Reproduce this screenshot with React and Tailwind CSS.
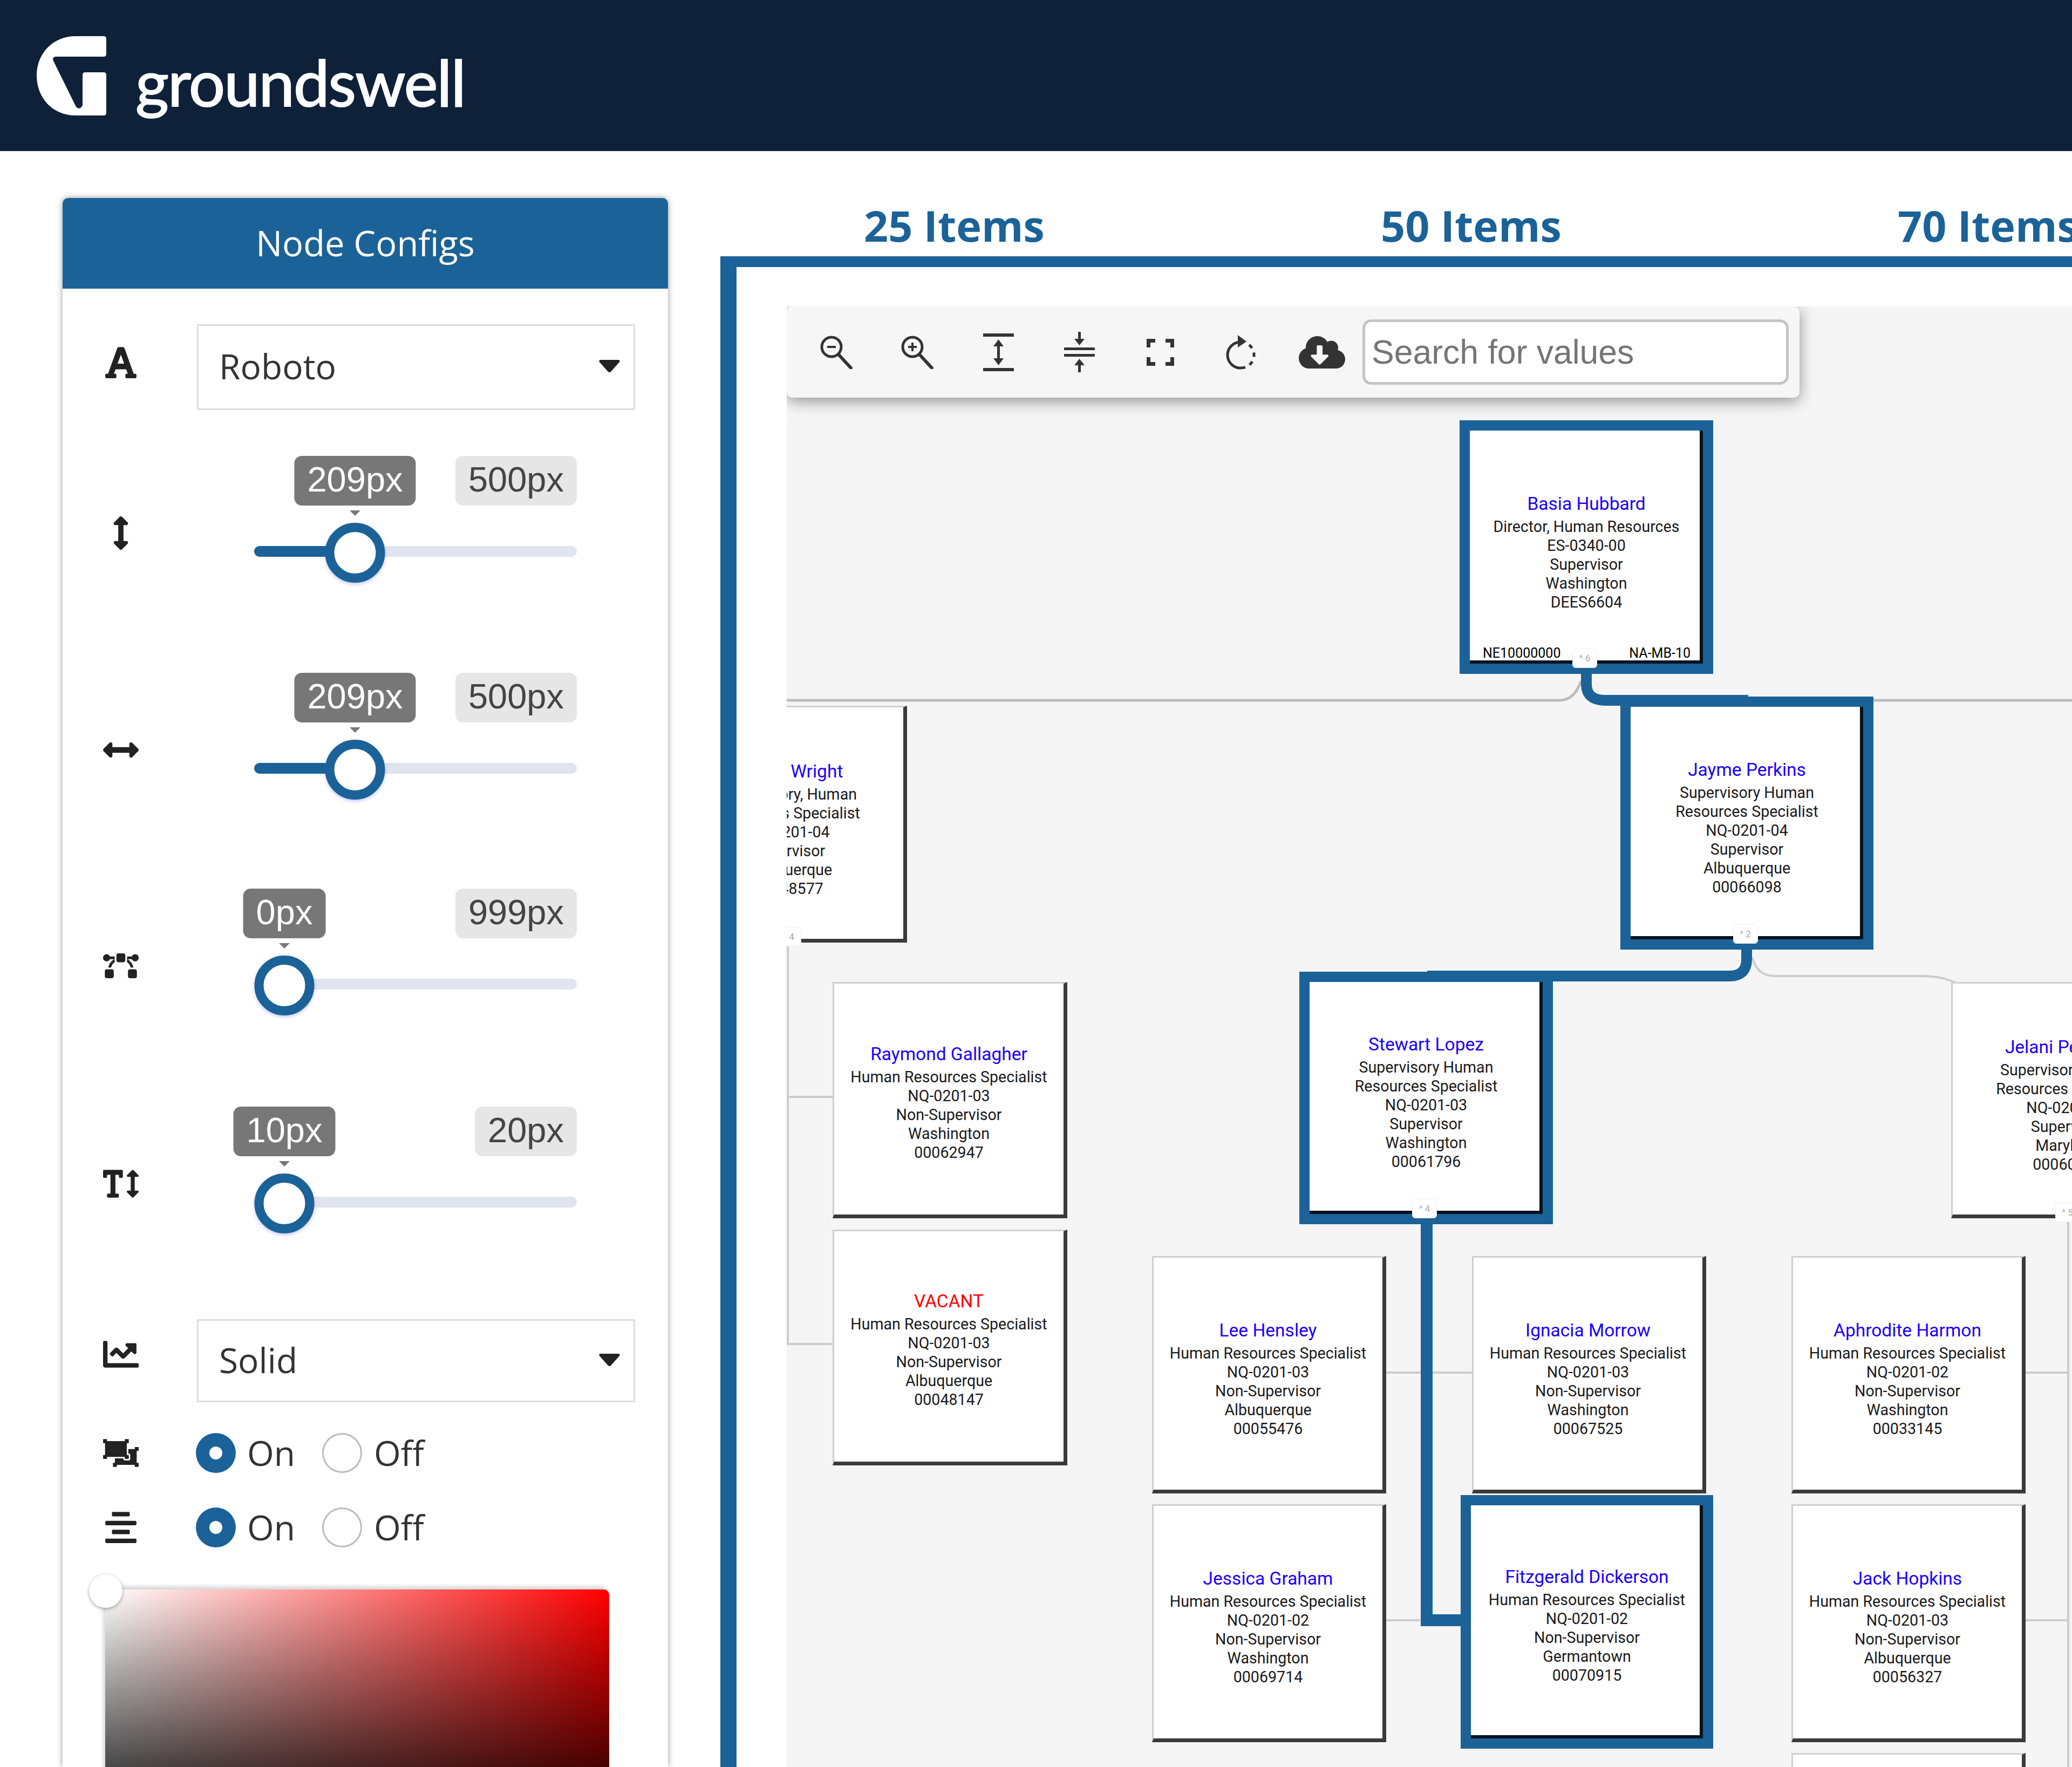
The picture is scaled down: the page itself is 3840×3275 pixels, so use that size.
import React from "react";
import { FaFont, FaArrowsAltV, FaArrowsAltH, FaBezierCurve, FaTextHeight, FaChartLine, FaObjectUngroup, FaAlignCenter, FaCloudDownloadAlt } from "react-icons/fa";

const OX = 1458;
const OY = 568;

const nodes = [
  { x: 1246, y: 1308, w: 435, h: 439, pt: "pt-[22px]", name: "Ariana Wright", lines: ["Supervisory, Human", "Resources Specialist", "NQ-0201-04", "Supervisor", "Albuquerque", "00048577"], btn: "^ 4" },
  { x: 1543, y: 1820, w: 435, h: 438, pt: "pt-[12px]", name: "Raymond Gallagher", lines: ["Human Resources Specialist", "NQ-0201-03", "Non-Supervisor", "Washington", "00062947"] },
  { x: 1543, y: 2279, w: 435, h: 437, pt: "pt-[12px]", name: "VACANT", red: true, lines: ["Human Resources Specialist", "NQ-0201-03", "Non-Supervisor", "Albuquerque", "00048147"] },
  { x: 2135, y: 2328, w: 434, h: 440, pt: "pt-[18px]", name: "Lee Hensley", lines: ["Human Resources Specialist", "NQ-0201-03", "Non-Supervisor", "Albuquerque", "00055476"] },
  { x: 2728, y: 2328, w: 434, h: 440, pt: "pt-[18px]", name: "Ignacia Morrow", lines: ["Human Resources Specialist", "NQ-0201-03", "Non-Supervisor", "Washington", "00067525"] },
  { x: 3320, y: 2328, w: 434, h: 440, pt: "pt-[18px]", name: "Aphrodite Harmon", lines: ["Human Resources Specialist", "NQ-0201-02", "Non-Supervisor", "Washington", "00033145"] },
  { x: 2135, y: 2788, w: 434, h: 441, pt: "pt-[18px]", name: "Jessica Graham", lines: ["Human Resources Specialist", "NQ-0201-02", "Non-Supervisor", "Washington", "00069714"] },
  { x: 3320, y: 2788, w: 434, h: 441, pt: "pt-[18px]", name: "Jack Hopkins", lines: ["Human Resources Specialist", "NQ-0201-03", "Non-Supervisor", "Albuquerque", "00056327"] },
  { x: 3320, y: 3249, w: 434, h: 441, pt: "pt-[18px]", lines: [] },
  { x: 3616, y: 1820, w: 435, h: 438, pt: "pt-[22px]", name: "Jelani Peterson", lines: ["Supervisory Human", "Resources Specialist", "NQ-0201-04", "Supervisor", "Maryland", "00060482"], btn: "^ 5" },
  { x: 2724, y: 798, w: 432, h: 432, pt: "pt-[24px]", hl: true, name: "Basia Hubbard", lines: ["Director, Human Resources", "ES-0340-00", "Supervisor", "Washington", "DEES6604"], foot: ["NE10000000", "NA-MB-10"], btn: "^ 6" },
  { x: 3022, y: 1310, w: 431, h: 431, pt: "pt-[22px]", hl: true, name: "Jayme Perkins", lines: ["Supervisory Human", "Resources Specialist", "NQ-0201-04", "Supervisor", "Albuquerque", "00066098"], btn: "^ 2" },
  { x: 2427, y: 1820, w: 432, h: 430, pt: "pt-[22px]", hl: true, name: "Stewart Lopez", lines: ["Supervisory Human", "Resources Specialist", "NQ-0201-03", "Supervisor", "Washington", "00061796"], btn: "^ 4" },
  { x: 2726, y: 2790, w: 430, h: 432, pt: "pt-[18px]", hl: true, name: "Fitzgerald Dickerson", lines: ["Human Resources Specialist", "NQ-0201-02", "Non-Supervisor", "Germantown", "00070915"] },
];

function Node({ n }) {
  const base = n.hl
    ? "shadow-[0_0_0_19px_#1b6298] border-r-[6px] border-b-[6px] border-[#04131f] pl-[6px]"
    : "border-l-[3px] border-t-[3px] border-r-[7px] border-b-[7px] border-t-[#cfcfcf] border-l-[#cfcfcf] border-r-[#3a3a3a] border-b-[#3a3a3a]";
  return (
    <div
      className={`absolute box-border bg-white flex flex-col items-center justify-center font-['Roboto',sans-serif] text-[28.6px] leading-[35px] text-[#1a1a1a] ${base} ${n.pt}`}
      style={{ left: n.x - OX, top: n.y - OY, width: n.w, height: n.h }}
    >
      {n.name && (
        <div className={`mb-[4px] text-[33.5px] leading-[42px] whitespace-nowrap ${n.red ? "text-[#ff0000]" : "text-[#1a00ff]"}`}>{n.name}</div>
      )}
      {n.lines.map((l, i) => (
        <div key={i} className="whitespace-nowrap">{l}</div>
      ))}
      {n.foot && (
        <div className="absolute left-[24px] right-[17px] bottom-[-2px] flex justify-between text-[25px] leading-[30px] text-black">
          <span>{n.foot[0]}</span>
          <span>{n.foot[1]}</span>
        </div>
      )}
      {n.btn && (
        <div className="absolute left-1/2 -translate-x-1/2 -bottom-[14px] w-[46px] h-[36px] bg-white rounded-[6px] border border-[#eeeeee] flex items-center justify-center text-[17px] leading-none text-[#aaaaaa]">
          {n.btn}
        </div>
      )}
    </div>
  );
}

function Connectors() {
  return (
    <svg className="absolute left-0 top-0 w-[2382px] h-[2707px]" viewBox={`${OX} ${OY} 2382 2707`} fill="none">
      <g stroke="#bdbdbd" strokeWidth="5">
        <path d="M2930 1262 Q2918 1298 2890 1298 H1458" />
        <path d="M3400 1298 H3840" />
      </g>
      <g stroke="#cccccc" strokeWidth="4">
        <path d="M1460 1747 V2491 H1543" />
        <path d="M1460 2033 H1543" />
        <path d="M3248 1775 Q3256 1809 3290 1809 H3560 Q3600 1809 3625 1822" />
        <path d="M2569 2544 H2728" />
        <path d="M2569 3003 H2632" />
        <path d="M3754 2544 H3833" />
        <path d="M3754 3003 H3833" />
        <path d="M3833 2262 V3275" />
      </g>
      <g stroke="#1b6298" strokeWidth="20">
        <path d="M2940 1245 V1268 Q2940 1298 2975 1298 H3240" />
        <path d="M3237 1755 V1778 Q3237 1809 3205 1809 H2645" />
        <path d="M2644 2265 V3003 H2710" strokeWidth="22" />
      </g>
    </svg>
  );
}

function Magnifier({ plus }) {
  return (
    <svg width="60" height="62" viewBox="0 0 60 62" fill="none" stroke="#333">
      <circle cx="21" cy="21" r="18" strokeWidth="5" />
      <path d="M34 35 L57 60" strokeWidth="6" strokeLinecap="round" />
      <path d="M13 21 H29" strokeWidth="4" />
      {plus && <path d="M21 13 V29" strokeWidth="4" />}
    </svg>
  );
}

function ExpandIcon() {
  return (
    <svg width="57" height="70" viewBox="0 0 57 70" fill="#333">
      <rect width="57" height="6" />
      <rect y="64" width="57" height="6" />
      <rect x="26" y="16" width="5" height="38" />
      <polygon points="28.5,11 19,24 38,24" />
      <polygon points="28.5,59 19,46 38,46" />
    </svg>
  );
}

function CompressIcon() {
  return (
    <svg width="57" height="75" viewBox="0 0 57 75" fill="#333">
      <rect y="29" width="57" height="5" />
      <rect y="41" width="57" height="5" />
      <rect x="26" y="0" width="5" height="16" />
      <polygon points="28.5,25 19,13 38,13" />
      <rect x="26" y="59" width="5" height="16" />
      <polygon points="28.5,50 19,62 38,62" />
    </svg>
  );
}

function FullIcon() {
  return (
    <svg width="51" height="50" viewBox="0 0 51 50" fill="none" stroke="#333" strokeWidth="7">
      <path d="M3.5 16 V3.5 H16" />
      <path d="M35 3.5 H47.5 V16" />
      <path d="M3.5 34 V46.5 H16" />
      <path d="M35 46.5 H47.5 V34" />
    </svg>
  );
}

function RotateIcon() {
  return (
    <svg width="57" height="66" viewBox="0 0 57 66" fill="none" stroke="#333" strokeWidth="5">
      <path d="M26 14 A24 24 0 0 0 28 62" />
      <path d="M28 62 A24 24 0 0 0 52 38 A24 24 0 0 0 40 17" strokeDasharray="8 9" />
      <polygon points="22,1 38,13 22,24" fill="#333" stroke="none" />
    </svg>
  );
}

function Caret() {
  return (
    <svg width="39" height="24" viewBox="0 0 39 24" fill="#222">
      <path d="M3 0 H36 Q40 0 38 4 L22 22 Q19.5 24 17 22 L1 4 Q-1 0 3 0Z" />
    </svg>
  );
}

function IconCol({ children, h }) {
  return <div className={`w-[216px] shrink-0 flex items-center justify-center text-[#222] ${h}`}>{children}</div>;
}

function Slider({ icon, value, max, thumb, fill, rowH }) {
  const chip = "h-[92px] px-[24px] pb-[5px] rounded-[14px] flex items-center text-[65px] leading-none font-['Liberation_Sans',sans-serif]";
  return (
    <div className={`flex ${rowH}`}>
      <IconCol h="h-[286px]">{icon}</IconCol>
      <div className="ml-[139px] w-[598px] relative">
        <div className="flex justify-end">
          <span className={`${chip} bg-[#e6e6e6] text-[#444]`}>{max}</span>
        </div>
        <span className={`${chip} absolute top-0 -translate-x-1/2 bg-[#777777] text-white whitespace-nowrap`} style={{ left: thumb }}>{value}</span>
        <span className="absolute top-[101px] -translate-x-1/2 w-0 h-0 border-x-[10px] border-x-transparent border-t-[10px] border-t-[#777777]" style={{ left: thumb }} />
        <div className="mt-[75px] h-[20px] rounded-full bg-[#dfe4ee] relative">
          {fill && <div className="absolute left-0 top-0 bottom-0 rounded-full bg-[#1b6298]" style={{ width: thumb }} />}
        </div>
        <span className="absolute top-[124px] -translate-x-1/2 w-[111px] h-[111px] rounded-full border-[17px] border-[#1b6298] bg-white shadow-[0_3px_6px_rgba(70,70,230,0.3)]" style={{ left: thumb }} />
      </div>
    </div>
  );
}

function Select({ icon, label, h, iconH }) {
  return (
    <div className="flex items-start">
      <IconCol h={iconH}>{icon}</IconCol>
      <div className={`ml-[33px] w-[812px] ${h} border-[3px] border-[#dddddd] flex items-center justify-between pl-[38px] pr-[25px] pb-[3px] text-[64px] text-[#333]`}>
        <span>{label}</span>
        <Caret />
      </div>
    </div>
  );
}

function Radios({ icon, mt }) {
  return (
    <div className={`flex items-center h-[74px] ${mt}`}>
      <IconCol h="h-[74px]">{icon}</IconCol>
      <div className="ml-[31px] flex items-center text-[64px] leading-none text-[#333]">
        <span className="w-[74px] h-[74px] rounded-full bg-[#1b6298] flex items-center justify-center">
          <span className="w-[24px] h-[24px] rounded-full bg-white" />
        </span>
        <span className="ml-[21px] w-[139px]">On</span>
        <span className="w-[74px] h-[74px] rounded-full bg-white border-[3px] border-[#bbbbbb]" />
        <span className="ml-[22px]">Off</span>
      </div>
    </div>
  );
}

function Panel() {
  return (
    <div className="ml-[116px] mt-[87px] w-[1122px] shrink-0 rounded-t-[10px] bg-white shadow-[0_0_12px_rgba(0,0,0,0.4)]">
      <div className="h-[168px] rounded-t-[10px] bg-[#1b6298] flex items-center justify-center text-white text-[65px]">Node Configs</div>
      <div className="pt-[66px]">
        <Select icon={<FaFont size={66} />} label="Roboto" h="h-[159px]" iconH="h-[142px]" />
        <div className="mt-[85px]">
          <Slider icon={<FaArrowsAltV size={62} />} value="209px" max="500px" thumb={187} fill rowH="h-[402px]" />
          <Slider icon={<FaArrowsAltH size={66} />} value="209px" max="500px" thumb={187} fill rowH="h-[400px]" />
          <Slider icon={<FaBezierCurve size={66} />} value="0px" max="999px" thumb={56} rowH="h-[404px]" />
          <Slider icon={<FaTextHeight size={66} />} value="10px" max="20px" thumb={56} rowH="h-[394px]" />
        </div>
        <Select icon={<FaChartLine size={66} />} label="Solid" h="h-[154px]" iconH="h-[130px]" />
        <Radios icon={<FaObjectUngroup size={66} />} mt="mt-[57px]" />
        <Radios icon={<FaAlignCenter size={66} />} mt="mt-[64px]" />
        <div className="relative mt-[78px] ml-[79px] w-[934px] h-[460px] rounded-tr-[10px] bg-[linear-gradient(to_right,#ffffff,#ff0000)] shadow-[-3px_-5px_8px_rgba(0,0,0,0.18)]">
          <div className="absolute inset-0 rounded-tr-[10px] bg-[linear-gradient(to_bottom,transparent,#000000)]" />
          <span className="absolute -left-[30px] -top-[28px] w-[62px] h-[62px] rounded-full bg-white shadow-[0_2px_6px_rgba(0,0,0,0.35)]" />
        </div>
      </div>
    </div>
  );
}

function Toolbar() {
  const slot = "w-[150px] shrink-0 flex items-center justify-center";
  return (
    <div className="absolute left-0 top-0 w-[1877px] h-[169px] rounded-[10px] bg-[#f6f6f6] shadow-[0_6px_28px_rgba(0,0,0,0.42)] flex items-center pl-[17px]">
      <span className={slot}><Magnifier /></span>
      <span className={slot}><Magnifier plus /></span>
      <span className={slot}><ExpandIcon /></span>
      <span className={slot}><CompressIcon /></span>
      <span className={slot}><FullIcon /></span>
      <span className={slot}><RotateIcon /></span>
      <span className={slot}><FaCloudDownloadAlt size={86} color="#333" /></span>
      <div className="w-[790px] h-[121px] shrink-0 box-border rounded-[16px] border-[5px] border-[#c4c4c4] bg-white flex items-center pl-[12px] text-[62.5px] text-[#757575] font-['Liberation_Sans',sans-serif]">
        Search for values
      </div>
    </div>
  );
}

export default function App() {
  return (
    <div className="w-[3840px] h-[3275px] overflow-hidden flex flex-col bg-white font-['Open_Sans',sans-serif]">
      <header className="h-[280px] shrink-0 bg-[#0f2039] flex items-start">
        <svg className="ml-[68px] mt-[67px]" width="129" height="147" viewBox="0 0 129 147" fill="#ffffff">
          <path d="M72 0 H124 Q129 0 129 5 V33 Q129 38 124 38 H36 Q28 38 31 46 L73 131 Q80 138 85 128 V72 Q85 67 90 67 H124 Q129 67 129 72 V142 Q129 147 124 147 H72 C30 147 0 115 0 73 C0 32 30 0 72 0Z" />
        </svg>
        <span className="ml-[54px] mt-[86px] text-[119px] leading-[130px] text-white font-['Lato',sans-serif] tracking-[-2px] [-webkit-text-stroke:2px_white]">groundswell</span>
      </header>
      <main className="flex-1 min-h-0 flex">
        <Panel />
        <section className="ml-[97px] flex-1 min-w-0 flex flex-col">
          <div className="h-[195px] shrink-0 flex items-end pb-[2px] pl-[266px] gap-[623px]">
            <span className="w-[335px] shrink-0 whitespace-nowrap text-[79px] leading-[110px] font-bold text-[#1b6298]">25 Items</span>
            <span className="w-[335px] shrink-0 whitespace-nowrap text-[79px] leading-[110px] font-bold text-[#1b6298]">50 Items</span>
            <span className="w-[335px] shrink-0 whitespace-nowrap text-[79px] leading-[110px] font-bold text-[#1b6298]">70 Items</span>
          </div>
          <div className="flex-1 min-h-0 flex border-l-[30px] border-t-[20px] border-[#1b6298] bg-white pl-[93px] pt-[73px]">
            <div className="relative flex-1 min-w-0 overflow-hidden bg-[#f5f5f5]">
              <Connectors />
              {nodes.map((n, i) => (
                <Node key={i} n={n} />
              ))}
              <Toolbar />
            </div>
          </div>
        </section>
      </main>
    </div>
  );
}
